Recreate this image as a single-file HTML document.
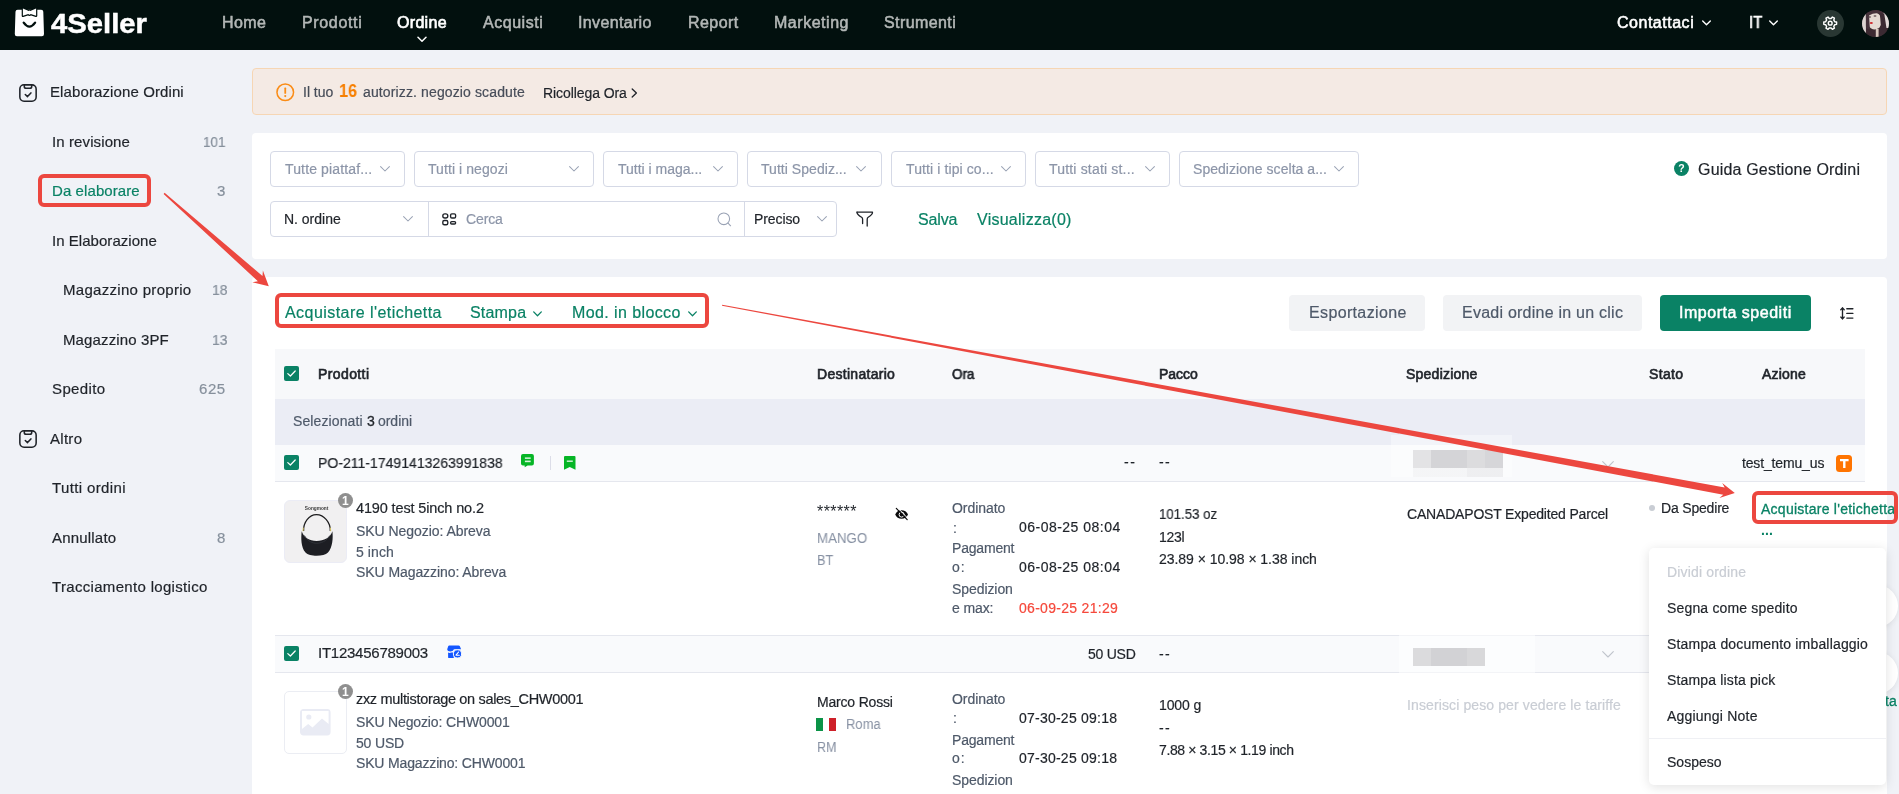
<!DOCTYPE html>
<html lang="it"><head><meta charset="utf-8"><title>4Seller</title>
<style>
html,body{margin:0;padding:0;}
body{width:1899px;height:794px;overflow:hidden;position:relative;background:#f0f2f7;font-family:"Liberation Sans", sans-serif;transform:translateZ(0);}
.t{position:absolute;white-space:pre;line-height:1;z-index:1;will-change:transform;}
.b{position:absolute;box-sizing:border-box;}
.sel{border:1px solid #d5d9e6;border-radius:4px;background:#fff;}
svg{position:absolute;overflow:visible;will-change:transform;}
</style></head><body>
<!-- header -->
<div class="b" style="left:0;top:0;width:1899px;height:49.5px;background:#02100e;"></div>
<!-- logo bag -->
<svg style="left:0;top:0" width="60" height="50" viewBox="0 0 60 50">
  <path d="M17.6 9.8 H41.2 Q43.2 9.8 43.3 11.7 L44 34 Q44 36.2 41.900 36.2 H16.900 Q14.800 36.2 14.800 34 L15.500 11.7 Q15.600 9.8 17.600 9.8 Z" fill="#fff"/>
  <path d="M22.900 8.500 L28.700 10.900 Q29.500 10.300 30.300 10.900 L36.100 8.500 V15.800 L30.700 14.100 Q29.500 15.300 28.300 14.100 L22.900 15.800 Z" fill="#fff" stroke="#02100e" stroke-width="2.4" stroke-linejoin="round"/>
  <path d="M22.900 8.500 L28.700 10.900 Q29.500 10.300 30.300 10.900 L36.100 8.500 V15.800 L30.700 14.100 Q29.500 15.300 28.300 14.100 L22.900 15.800 Z" fill="#fff"/>
  <path d="M23.700 22.600 Q29.400 30.600 35.100 22.600" fill="none" stroke="#02100e" stroke-width="2.3" stroke-linecap="round"/>
</svg>
<!-- nav chevron under Ordine -->
<svg style="left:417px;top:36px" width="10" height="7" viewBox="0 0 10 7"><path d="M1 1.2 L5 5.2 L9 1.2" fill="none" stroke="#fff" stroke-width="1.5" stroke-linecap="round" stroke-linejoin="round"/></svg>
<!-- Contattaci chevron / IT chevron -->
<svg style="left:1701.5px;top:19.5px" width="9" height="6" viewBox="0 0 9 6"><path d="M0.7 0.9 L4.5 4.7 L8.3 0.9" fill="none" stroke="#fff" stroke-width="1.4" stroke-linecap="round" stroke-linejoin="round"/></svg>
<svg style="left:1769.3px;top:19.5px" width="9" height="6" viewBox="0 0 9 6"><path d="M0.7 0.9 L4.5 4.7 L8.3 0.9" fill="none" stroke="#fff" stroke-width="1.4" stroke-linecap="round" stroke-linejoin="round"/></svg>
<!-- gear -->
<div class="b" style="left:1816.9px;top:9.9px;width:27.2px;height:27.2px;border-radius:50%;background:#293733;"></div>
<svg style="left:1822.8px;top:15.5px" width="14.4" height="14.4" viewBox="0 0 14.4 14.4" fill="none" stroke="#fff" stroke-width="1.45" stroke-linejoin="round"><path d="M11.75 5.67 L13.60 6.05 L13.60 8.35 L11.75 8.73 L10.80 10.37 L11.40 12.16 L9.40 13.32 L8.15 11.91 L6.25 11.91 L5.00 13.32 L3.00 12.16 L3.60 10.37 L2.65 8.73 L0.80 8.35 L0.80 6.05 L2.65 5.67 L3.60 4.03 L3.00 2.24 L5.00 1.08 L6.25 2.49 L8.15 2.49 L9.40 1.08 L11.40 2.24 L10.80 4.03 Z"/><circle cx="7.2" cy="7.2" r="1.9"/></svg>
<!-- avatar -->
<svg style="left:1861.8px;top:9.9px" width="27" height="27" viewBox="0 0 27 27">
  <defs><clipPath id="av"><circle cx="13.5" cy="13.5" r="13.5"/></clipPath><filter id="bl" x="-20%" y="-20%" width="140%" height="140%"><feGaussianBlur stdDeviation="0.5"/></filter></defs>
  <g clip-path="url(#av)"><rect width="27" height="27" fill="#3c2a30"/>
  <g filter="url(#bl)">
  <rect x="-2" y="4" width="7" height="20" fill="#ddd5d2"/>
  <rect x="21.500" y="1" width="7" height="17" fill="#e3dcda"/>
  <ellipse cx="12" cy="10.500" rx="7.600" ry="9" fill="#e5dad3" transform="rotate(-18 12 10.500)"/>
  <path d="M3.800 3 L6.800 2 L8.500 28 L4 28 Z" fill="#45313a"/>
  <path d="M6 2.500 Q14 -2 22 2 L20.500 5 Q14 1.500 7 5.500 Z" fill="#47333b"/>
  <path d="M17.800 3 L22.300 4 L26 28 L15.500 28 L18.800 15 Z" fill="#3b2930"/>
  <path d="M4 18.500 L13.200 20.500 L13.800 28 L5 28 Z" fill="#3e2b32"/>
  <rect x="13.800" y="19" width="2.800" height="9" fill="#d9c9c0"/>
  <ellipse cx="7.600" cy="7" rx="1.500" ry="0.800" fill="#5f4c50"/><ellipse cx="13" cy="6" rx="1.500" ry="0.800" fill="#5f4c50"/>
  </g><ellipse cx="9.300" cy="13" rx="1.600" ry="1" fill="#cf2a2e"/></g>
</svg>

<!-- sidebar icons -->
<svg style="left:19.1px;top:83.9px" width="18" height="18" viewBox="0 0 18 18" fill="none" stroke="#1f2329" stroke-width="1.55" stroke-linejoin="round" stroke-linecap="round"><rect x="0.85" y="0.85" width="16.3" height="16.3" rx="4.2"/><path d="M5.300 0.900 V2.400 Q5.300 4.200 7.100 4.200 H10.900 Q12.700 4.200 12.700 2.400 V0.900"/><path d="M6.300 10.500 L8.500 12.600 L11.900 8.900"/></svg>
<svg style="left:19.1px;top:429.9px" width="18" height="18" viewBox="0 0 18 18" fill="none" stroke="#1f2329" stroke-width="1.55" stroke-linejoin="round" stroke-linecap="round"><rect x="0.85" y="0.85" width="16.3" height="16.3" rx="4.2"/><path d="M5.300 0.900 V2.400 Q5.300 4.200 7.100 4.200 H10.900 Q12.700 4.200 12.700 2.400 V0.900"/><path d="M6.300 10.500 L8.500 12.600 L11.900 8.900"/></svg>
<!-- red box around Da elaborare -->
<div class="b" style="left:37.5px;top:174.4px;width:113.2px;height:32.2px;border:4px solid #ec473f;border-radius:6px;z-index:3;"></div>

<!-- alert -->
<div class="b" style="left:252px;top:68px;width:1635px;height:46.5px;background:#f4eae4;border:1px solid #f6d6b4;border-radius:4px;"></div>
<svg style="left:275.5px;top:82.5px" width="18.5" height="18.5" viewBox="0 0 18.5 18.5"><circle cx="9.25" cy="9.25" r="8.3" fill="none" stroke="#fa8c16" stroke-width="1.5"/><rect x="8.35" y="4.6" width="1.8" height="6.2" rx="0.6" fill="#fa8c16"/><circle cx="9.25" cy="13.1" r="1.05" fill="#fa8c16"/></svg>
<svg style="left:631px;top:88px" width="7" height="10" viewBox="0 0 7 10"><path d="M1.2 1 L5.4 5 L1.2 9" fill="none" stroke="#1f2329" stroke-width="1.3" stroke-linecap="round" stroke-linejoin="round"/></svg>

<!-- filter card -->
<div class="b" style="left:252px;top:133px;width:1635px;height:125.7px;background:#fff;border-radius:4px;"></div>
<!-- selects row1 -->
<div class="b sel" style="left:270px;top:151px;width:134.5px;height:35.6px;"></div>
<div class="b sel" style="left:414px;top:151px;width:179.5px;height:35.6px;"></div>
<div class="b sel" style="left:603px;top:151px;width:134.5px;height:35.6px;"></div>
<div class="b sel" style="left:747px;top:151px;width:134.5px;height:35.6px;"></div>
<div class="b sel" style="left:891px;top:151px;width:134.5px;height:35.6px;"></div>
<div class="b sel" style="left:1035px;top:151px;width:134.5px;height:35.6px;"></div>
<div class="b sel" style="left:1179px;top:151px;width:179.5px;height:35.6px;"></div>
<!-- row 2 selects -->
<div class="b sel" style="left:270px;top:201px;width:566.5px;height:35.6px;"></div>
<div class="b" style="left:428px;top:202px;width:1px;height:34px;background:#d5d9e6;"></div>
<div class="b" style="left:744px;top:202px;width:1px;height:34px;background:#d5d9e6;"></div>
<!-- select chevrons -->
<svg class="c" style="left:380px;top:165.5px" width="10" height="6" viewBox="0 0 10 6"><path d="M0.6 0.6 L5 5 L9.4 0.6" fill="none" stroke="#99a2b4" stroke-width="1.05" stroke-linecap="round" stroke-linejoin="round"/></svg>
<svg class="c" style="left:569.3px;top:165.5px" width="10" height="6" viewBox="0 0 10 6"><path d="M0.6 0.6 L5 5 L9.4 0.6" fill="none" stroke="#99a2b4" stroke-width="1.05" stroke-linecap="round" stroke-linejoin="round"/></svg>
<svg class="c" style="left:713px;top:165.5px" width="10" height="6" viewBox="0 0 10 6"><path d="M0.6 0.6 L5 5 L9.4 0.6" fill="none" stroke="#99a2b4" stroke-width="1.05" stroke-linecap="round" stroke-linejoin="round"/></svg>
<svg class="c" style="left:856px;top:165.5px" width="10" height="6" viewBox="0 0 10 6"><path d="M0.6 0.6 L5 5 L9.4 0.6" fill="none" stroke="#99a2b4" stroke-width="1.05" stroke-linecap="round" stroke-linejoin="round"/></svg>
<svg class="c" style="left:1001px;top:165.5px" width="10" height="6" viewBox="0 0 10 6"><path d="M0.6 0.6 L5 5 L9.4 0.6" fill="none" stroke="#99a2b4" stroke-width="1.05" stroke-linecap="round" stroke-linejoin="round"/></svg>
<svg class="c" style="left:1144.5px;top:165.5px" width="10" height="6" viewBox="0 0 10 6"><path d="M0.6 0.6 L5 5 L9.4 0.6" fill="none" stroke="#99a2b4" stroke-width="1.05" stroke-linecap="round" stroke-linejoin="round"/></svg>
<svg class="c" style="left:1334px;top:165.5px" width="10" height="6" viewBox="0 0 10 6"><path d="M0.6 0.6 L5 5 L9.4 0.6" fill="none" stroke="#99a2b4" stroke-width="1.05" stroke-linecap="round" stroke-linejoin="round"/></svg>
<svg class="c" style="left:403px;top:215.5px" width="10" height="6" viewBox="0 0 10 6"><path d="M0.6 0.6 L5 5 L9.4 0.6" fill="none" stroke="#99a2b4" stroke-width="1.05" stroke-linecap="round" stroke-linejoin="round"/></svg>
<svg class="c" style="left:817px;top:215.5px" width="10" height="6" viewBox="0 0 10 6"><path d="M0.6 0.6 L5 5 L9.4 0.6" fill="none" stroke="#99a2b4" stroke-width="1.05" stroke-linecap="round" stroke-linejoin="round"/></svg>
<!-- guide icon -->
<svg style="left:1674px;top:161.2px" width="15" height="15" viewBox="0 0 15 15"><circle cx="7.5" cy="7.5" r="7.5" fill="#0a8265"/><text x="7.5" y="11.3" font-family="Liberation Sans" font-weight="700" font-size="10.5" fill="#fff" text-anchor="middle">?</text></svg>
<!-- search grid icon -->
<svg style="left:441.5px;top:212.8px" width="14.5" height="12.5" viewBox="0 0 14.5 12.5" fill="none" stroke="#1f2329" stroke-width="1.35"><rect x="0.8" y="0.8" width="5" height="4.2" rx="2.1"/><rect x="8.6" y="0.8" width="5" height="4.2" rx="1.3"/><rect x="0.8" y="7.5" width="5" height="4.2" rx="1.5"/><rect x="8.6" y="8.6" width="5" height="2.4" rx="1.1"/></svg>
<!-- search magnifier -->
<svg style="left:716.5px;top:211.5px" width="15" height="15" viewBox="0 0 15 15" fill="none" stroke="#99a2b4" stroke-width="1.05" stroke-linecap="round"><circle cx="6.8" cy="6.8" r="5.8"/><path d="M11 11.2 L13.6 13.8"/></svg>
<!-- filter funnel -->
<svg style="left:855.5px;top:211px" width="17.5" height="16" viewBox="0 0 17.5 16" fill="none" stroke="#1f2329" stroke-width="1.3" stroke-linejoin="round" stroke-linecap="round"><path d="M1 1.2 H16.5 Q16.8 3.6 12.2 6.2 Q11.2 6.9 11.2 8.2 V15"/><path d="M1 1.2 Q1 3.6 5.6 6.2 Q6.6 6.9 6.6 8.2 V12.6"/></svg>

<!-- table card -->
<div class="b" style="left:252px;top:277px;width:1635px;height:530px;background:#fff;border-radius:4px;"></div>
<!-- toolbar red box -->
<div class="b" style="left:275.4px;top:293.4px;width:433.4px;height:34.3px;border:4px solid #ec473f;border-radius:6px;z-index:3;"></div>
<svg style="left:533.3px;top:311px" width="9" height="6" viewBox="0 0 9 6"><path d="M0.7 0.9 L4.5 4.7 L8.3 0.9" fill="none" stroke="#0a8265" stroke-width="1.3" stroke-linecap="round" stroke-linejoin="round"/></svg>
<svg style="left:688.4px;top:311px" width="9" height="6" viewBox="0 0 9 6"><path d="M0.7 0.9 L4.5 4.7 L8.3 0.9" fill="none" stroke="#0a8265" stroke-width="1.3" stroke-linecap="round" stroke-linejoin="round"/></svg>
<!-- buttons -->
<div class="b" style="left:1289px;top:295px;width:136px;height:35.5px;border-radius:4px;background:#f2f3f5;"></div>
<div class="b" style="left:1443px;top:295px;width:198.5px;height:35.5px;border-radius:4px;background:#f2f3f5;"></div>
<div class="b" style="left:1660px;top:295px;width:151px;height:35.5px;border-radius:4px;background:#0a8265;"></div>
<!-- density icon -->
<svg style="left:1839.6px;top:307.4px" width="13.6" height="12.8" viewBox="0 0 13.6 12.8" fill="none" stroke="#1f2329" stroke-width="1.35" stroke-linecap="round" stroke-linejoin="round"><path d="M2.500 1 V11.800"/><path d="M0.800 2.700 L2.500 1 L4.200 2.700"/><path d="M0.800 10.100 L2.500 11.800 L4.200 10.100"/><path d="M6.800 1.700 H12.900"/><path d="M6.800 6.400 H12.900"/><path d="M6.800 11.100 H12.900"/></svg>

<!-- table header -->
<div class="b" style="left:275px;top:349px;width:1590px;height:50px;background:#f7f8fa;"></div>
<div class="b" style="left:275px;top:399px;width:1590px;height:45.7px;background:#ebedf5;"></div>
<!-- order row 1 -->
<div class="b" style="left:275px;top:444.7px;width:1590px;height:37px;background:#f9fafc;border-bottom:1px solid #e5e7ee;"></div>
<!-- order row 2 -->
<div class="b" style="left:275px;top:635px;width:1590px;height:37.6px;background:#f9fafc;border-top:1px solid #e5e7ee;border-bottom:1px solid #e5e7ee;"></div>
<!-- checkboxes -->
<svg style="left:284.2px;top:366px" width="15" height="15" viewBox="0 0 15 15"><rect width="15" height="15" rx="2" fill="#0a8265"/><path d="M3.8 7.6 L6.4 10 L11.2 5" fill="none" stroke="#fff" stroke-width="1.25" stroke-linecap="round" stroke-linejoin="round"/></svg>
<svg style="left:284.2px;top:455px" width="15" height="15" viewBox="0 0 15 15"><rect width="15" height="15" rx="2" fill="#0a8265"/><path d="M3.8 7.6 L6.4 10 L11.2 5" fill="none" stroke="#fff" stroke-width="1.25" stroke-linecap="round" stroke-linejoin="round"/></svg>
<svg style="left:284.2px;top:646px" width="15" height="15" viewBox="0 0 15 15"><rect width="15" height="15" rx="2" fill="#0a8265"/><path d="M3.8 7.6 L6.4 10 L11.2 5" fill="none" stroke="#fff" stroke-width="1.25" stroke-linecap="round" stroke-linejoin="round"/></svg>
<!-- order row 1 icons -->
<svg style="left:521.3px;top:453.7px" width="12.9" height="13.4" viewBox="0 0 12.9 13.4"><path d="M2 0 H10.900 Q12.900 0 12.900 2 V9.400 Q12.900 11.400 10.900 11.400 H6.600 L3.700 13.300 V11.400 H2 Q0 11.400 0 9.400 V2 Q0 0 2 0 Z" fill="#06b526"/><rect x="3.900" y="3.400" width="5.800" height="1.500" fill="#d8f3dc"/><rect x="3.900" y="6.600" width="5.800" height="1.600" fill="#d8f3dc"/></svg>
<div class="b" style="left:550px;top:456px;width:1px;height:14px;background:#dcdde8;"></div>
<svg style="left:564.2px;top:456.1px" width="11.5" height="13.7" viewBox="0 0 11.5 13.7"><path d="M1 0 H10.500 Q11.500 0 11.500 1 V13.700 L5.750 11 L0 13.700 V1 Q0 0 1 0 Z" fill="#06b526"/><rect x="2.800" y="4.500" width="6" height="1.400" fill="#d8f3dc"/></svg>
<!-- blurred shipping 1 -->
<div class="b" style="left:1391px;top:435px;width:121px;height:42px;background:rgba(255,255,255,0.38);"></div>
<div class="b" style="left:1413px;top:467.5px;width:90px;height:9px;background:linear-gradient(90deg,rgba(225,225,228,0.25) 0 60%,rgba(225,225,228,0.5) 60%);"></div>
<div class="b" style="left:1413px;top:450px;width:90px;height:17.5px;background:linear-gradient(90deg,#e3e3e5 0 20%,#d4d4d7 20% 60%,#dcdcde 60% 80%,#d6d6d9 80%);"></div>
<svg style="left:1601.8px;top:460.5px" width="12" height="7" viewBox="0 0 12 7"><path d="M0.7 0.7 L6 6 L11.3 0.7" fill="none" stroke="#c0c4cc" stroke-width="1.1" stroke-linecap="round" stroke-linejoin="round"/></svg>
<!-- T icon -->
<div class="b" style="left:1835.5px;top:455.2px;width:16.7px;height:16.4px;border-radius:3.5px;background:#ff7400;"></div>
<svg style="left:1839.6px;top:459px" width="8.6" height="9" viewBox="0 0 8.6 9"><path d="M0 0 H8.6 V2.3 H5.5 V9 H3.1 V2.3 H0 Z" fill="#fff"/></svg>

<!-- product image 1 -->
<div class="b" style="left:284.2px;top:499.8px;width:62.7px;height:62.8px;border-radius:6px;background:#f1f0f1;border:1px solid #ebecf5;overflow:hidden;">
<svg style="left:-1px;top:-1px" width="63" height="63" viewBox="0 0 63 63">
  <text x="32.6" y="9.6" font-family="Liberation Sans" font-size="5.2" font-weight="700" fill="#3a3a3a" text-anchor="middle" textLength="23.5" lengthAdjust="spacingAndGlyphs">Songmont</text>
  <path d="M19.600 31 C19.200 22.500 25 14.700 32.500 14.700 C40 14.700 46.600 22.500 46.300 31" fill="none" stroke="#1c1c1e" stroke-width="1.25"/>
  <path d="M17.700 31.300 C16.900 38 17 47.500 21.500 52.500 C25.500 56.800 39.800 56.800 44 52.500 C48.600 47.500 49.200 38 48.400 31.300 C46.300 37.800 40 41 32.600 41 C25.200 41 20 37.800 17.700 31.300 Z" fill="#1d1e23"/>
  <path d="M20.500 35.500 C23.500 41.500 29 43.300 32.600 43.300 C36.500 43.300 42.500 41.500 45.800 35.500" fill="none" stroke="#34363c" stroke-width="0.8"/>
  <path d="M19.300 27.600 l-0.300 3.600" stroke="#d8c66a" stroke-width="1"/><path d="M46.400 27.600 l0.300 3.600" stroke="#d8c66a" stroke-width="1"/>
</svg></div>
<div class="b" style="left:338px;top:493.2px;width:15px;height:15px;border-radius:50%;background:#8f8f8f;"></div>
<svg style="left:338px;top:493.2px;z-index:2" width="15" height="15" viewBox="0 0 15 15"><text x="7.3" y="11.8" font-family="Liberation Sans" font-size="12" font-weight="700" fill="#fff" text-anchor="middle">1</text></svg>
<!-- eye-slash -->
<svg style="left:895px;top:507.600px" width="13.2" height="12.6" viewBox="0 0 13.2 12.6">
  <path d="M0.200 6.600 C2 0.900 11.100 0.900 13 6.600 C11.100 12.300 2 12.300 0.200 6.600 Z" fill="#0b0b0c"/>
  <circle cx="6.600" cy="6.600" r="2.500" fill="none" stroke="#fff" stroke-width="1"/>
  <path d="M2.700 -0.200 L13 10.600" stroke="#fff" stroke-width="1"/>
  <path d="M1.300 0.400 L12.200 11.600" stroke="#0b0b0c" stroke-width="1.200" stroke-linecap="round"/>
</svg>
<!-- status dot -->
<div class="b" style="left:1649px;top:505px;width:6px;height:6px;border-radius:50%;background:#c9cdd4;"></div>
<!-- action red box -->
<div class="b" style="left:1752.1px;top:491px;width:146.2px;height:32.9px;border:4px solid #ec473f;border-radius:6px;z-index:7;"></div>

<!-- order row 2 icon -->
<svg style="left:446.9px;top:645px" width="14.4" height="13.4" viewBox="0 0 14.4 13.4">
  <path d="M2.200 0.400 H11.600 Q12.500 0.400 12.900 1.300 L14.100 4.300 H7 Q5.900 6.500 3.500 6.500 Q0.500 6.500 0.200 4.300 L1.200 1.300 Q1.500 0.400 2.200 0.400 Z" fill="#1456ff"/>
  <path d="M1.100 7.600 Q2.600 8.300 4.200 7.600 H6.800 V13.100 H2 Q1.100 13.100 1.100 12.200 Z" fill="#1456ff"/>
  <circle cx="10.500" cy="8.900" r="4.100" fill="#1456ff" stroke="#f9fafc" stroke-width="1"/>
  <path d="M11.600 7 L9 10.200 H12.300" fill="none" stroke="#fff" stroke-width="1.100" stroke-linecap="round" stroke-linejoin="round"/>
</svg>
<!-- blurred shipping 2 -->
<div class="b" style="left:1399px;top:630.5px;width:136px;height:46.5px;background:rgba(255,255,255,0.55);"></div>
<div class="b" style="left:1413px;top:648px;width:72px;height:17.8px;background:linear-gradient(90deg,#dbdbdd 0 25%,#d2d2d5 25% 75%,#d8d8da 75%);"></div>
<svg style="left:1601.8px;top:651px" width="12" height="7" viewBox="0 0 12 7"><path d="M0.7 0.7 L6 6 L11.3 0.7" fill="none" stroke="#c0c4cc" stroke-width="1.1" stroke-linecap="round" stroke-linejoin="round"/></svg>
<!-- product image 2 -->
<div class="b" style="left:284.1px;top:691px;width:62.8px;height:62.6px;border-radius:5px;background:#fff;border:1px solid #ebedf3;"></div>
<svg style="left:300px;top:708.5px" width="30.6" height="26.5" viewBox="0 0 30.600 26.500"><rect x="0.900" y="0.900" width="28.800" height="24.700" rx="2.500" fill="#e9ebf4" stroke="#e9ebf4" stroke-width="1.800"/><path d="M2 2 H28.600 V15 L22 9.500 L12.500 18.500 L8.200 15 L2 20 Z" fill="#fff"/><circle cx="8.800" cy="8" r="2.600" fill="#e9ebf4"/></svg>
<div class="b" style="left:338px;top:684.2px;width:15px;height:15px;border-radius:50%;background:#8f8f8f;"></div>
<svg style="left:338px;top:684.2px;z-index:2" width="15" height="15" viewBox="0 0 15 15"><text x="7.3" y="11.8" font-family="Liberation Sans" font-size="12" font-weight="700" fill="#fff" text-anchor="middle">1</text></svg>
<!-- flag -->
<div class="b" style="left:815.9px;top:718.1px;width:20.2px;height:12.7px;background:linear-gradient(90deg,#0b9347 0 35%,#fff 35% 65.5%,#ce2029 65.5%);"></div>

<!-- right floating buttons (partially visible) -->
<div class="b" style="left:1856px;top:585px;width:42px;height:42px;border-radius:50%;background:#fff;box-shadow:0 1px 6px rgba(0,0,0,0.08);"></div>
<div class="b" style="left:1856px;top:652px;width:42px;height:42px;border-radius:50%;background:#fff;box-shadow:0 1px 6px rgba(0,0,0,0.08);"></div>
<div class="b" style="left:1887px;top:277px;width:12px;height:300px;background:#f0f2f7;"></div>

<!-- dropdown -->
<div class="b" style="left:1649px;top:548px;width:237px;height:236.5px;background:#fff;border-radius:5px;box-shadow:0 2px 12px rgba(0,0,0,0.12);z-index:5;"></div>
<div class="b" style="left:1649px;top:738px;width:237px;height:1px;background:#eff0f4;z-index:6;"></div>

<!-- arrows -->
<svg style="left:0;top:0;z-index:8" width="1899" height="794" viewBox="0 0 1899 794">
  <path d="M163.6 193.9 L257.9 281.2 L252.3 282.3 L268.8 286.3 L262.9 270.4 L262.5 276.1 L164.6 192.7 Z" fill="#ec473f"/>
  <path d="M722.0 305.8 L1723.3 494.7 L1719.4 498.1 L1734.8 493.1 L1722.2 482.9 L1724.7 487.5 L722.2 304.8 Z" fill="#ec473f"/>
</svg>

<span class="t" style="left:51.0px;top:10.0px;font-size:28px;color:#ffffff;letter-spacing:0.000px;font-weight:700;-webkit-text-stroke:0.5px #ffffff;transform-origin:0 0;transform:scaleX(1.0451);">4Seller</span>
<span class="t" style="left:221.8px;top:15.0px;font-size:16px;color:#b3b7b6;letter-spacing:0.371px;-webkit-text-stroke:0.55px #b3b7b6;">Home</span>
<span class="t" style="left:301.6px;top:15.0px;font-size:16px;color:#b3b7b6;letter-spacing:0.651px;-webkit-text-stroke:0.55px #b3b7b6;">Prodotti</span>
<span class="t" style="left:397.0px;top:15.0px;font-size:16px;color:#ffffff;letter-spacing:0.314px;-webkit-text-stroke:0.65px #ffffff;">Ordine</span>
<span class="t" style="left:482.6px;top:15.0px;font-size:16px;color:#b3b7b6;letter-spacing:0.524px;-webkit-text-stroke:0.55px #b3b7b6;">Acquisti</span>
<span class="t" style="left:578.4px;top:15.0px;font-size:16px;color:#b3b7b6;letter-spacing:0.348px;-webkit-text-stroke:0.55px #b3b7b6;">Inventario</span>
<span class="t" style="left:687.5px;top:15.0px;font-size:16px;color:#b3b7b6;letter-spacing:0.434px;-webkit-text-stroke:0.55px #b3b7b6;">Report</span>
<span class="t" style="left:773.8px;top:15.0px;font-size:16px;color:#b3b7b6;letter-spacing:0.531px;-webkit-text-stroke:0.55px #b3b7b6;">Marketing</span>
<span class="t" style="left:884.4px;top:15.0px;font-size:16px;color:#b3b7b6;letter-spacing:0.404px;-webkit-text-stroke:0.55px #b3b7b6;">Strumenti</span>
<span class="t" style="left:1617.3px;top:15.0px;font-size:16px;color:#ffffff;letter-spacing:0.517px;-webkit-text-stroke:0.55px #ffffff;">Contattaci</span>
<span class="t" style="left:1748.6px;top:15.0px;font-size:16px;color:#ffffff;letter-spacing:0.000px;-webkit-text-stroke:0.55px #ffffff;transform-origin:0 0;transform:scaleX(0.9424);">IT</span>
<span class="t" style="left:50.0px;top:84.0px;font-size:15px;color:#1f2329;letter-spacing:0.108px;-webkit-text-stroke:0.2px #1f2329;">Elaborazione Ordini</span>
<span class="t" style="left:52.2px;top:134.0px;font-size:15px;color:#1f2329;letter-spacing:0.107px;-webkit-text-stroke:0.2px #1f2329;">In revisione</span>
<span class="t" style="left:202.6px;top:134.0px;font-size:15px;color:#86909c;letter-spacing:0.000px;-webkit-text-stroke:0.2px #86909c;transform-origin:0 0;transform:scaleX(0.8989);">101</span>
<span class="t" style="left:52.2px;top:183.0px;font-size:15px;color:#0a8265;letter-spacing:0.089px;-webkit-text-stroke:0.2px #0a8265;">Da elaborare</span>
<span class="t" style="left:216.7px;top:183.0px;font-size:15px;color:#86909c;letter-spacing:-0.244px;-webkit-text-stroke:0.2px #86909c;">3</span>
<span class="t" style="left:52.2px;top:233.0px;font-size:15px;color:#1f2329;letter-spacing:0.039px;-webkit-text-stroke:0.2px #1f2329;">In Elaborazione</span>
<span class="t" style="left:63.3px;top:282.0px;font-size:15px;color:#1f2329;letter-spacing:0.300px;-webkit-text-stroke:0.2px #1f2329;">Magazzino proprio</span>
<span class="t" style="left:211.6px;top:282.0px;font-size:15px;color:#86909c;letter-spacing:0.000px;-webkit-text-stroke:0.2px #86909c;transform-origin:0 0;transform:scaleX(0.9348);">18</span>
<span class="t" style="left:63.3px;top:332.0px;font-size:15px;color:#1f2329;letter-spacing:0.123px;-webkit-text-stroke:0.2px #1f2329;">Magazzino 3PF</span>
<span class="t" style="left:211.6px;top:332.0px;font-size:15px;color:#86909c;letter-spacing:0.000px;-webkit-text-stroke:0.2px #86909c;transform-origin:0 0;transform:scaleX(0.9348);">13</span>
<span class="t" style="left:52.0px;top:381.0px;font-size:15px;color:#1f2329;letter-spacing:0.371px;-webkit-text-stroke:0.2px #1f2329;">Spedito</span>
<span class="t" style="left:198.6px;top:381.0px;font-size:15px;color:#86909c;letter-spacing:0.584px;-webkit-text-stroke:0.2px #86909c;">625</span>
<span class="t" style="left:50.0px;top:431.0px;font-size:15px;color:#1f2329;letter-spacing:0.289px;-webkit-text-stroke:0.2px #1f2329;">Altro</span>
<span class="t" style="left:52.0px;top:480.0px;font-size:15px;color:#1f2329;letter-spacing:0.365px;-webkit-text-stroke:0.2px #1f2329;">Tutti ordini</span>
<span class="t" style="left:52.2px;top:530.0px;font-size:15px;color:#1f2329;letter-spacing:0.192px;-webkit-text-stroke:0.2px #1f2329;">Annullato</span>
<span class="t" style="left:216.7px;top:530.0px;font-size:15px;color:#86909c;letter-spacing:-0.244px;-webkit-text-stroke:0.2px #86909c;">8</span>
<span class="t" style="left:52.2px;top:579.0px;font-size:15px;color:#1f2329;letter-spacing:0.320px;-webkit-text-stroke:0.2px #1f2329;">Tracciamento logistico</span>
<span class="t" style="left:303.0px;top:85.0px;font-size:14px;color:#474d59;letter-spacing:-0.012px;-webkit-text-stroke:0.2px #474d59;">Il tuo</span>
<span class="t" style="left:338.8px;top:82.0px;font-size:18.5px;color:#f77f00;letter-spacing:0.000px;font-weight:700;transform-origin:0 0;transform:scaleX(0.8796);">16</span>
<span class="t" style="left:363.0px;top:85.0px;font-size:14px;color:#474d59;letter-spacing:0.126px;-webkit-text-stroke:0.2px #474d59;">autorizz. negozio scadute</span>
<span class="t" style="left:543.0px;top:86.0px;font-size:14px;color:#1f2329;letter-spacing:-0.077px;-webkit-text-stroke:0.2px #1f2329;">Ricollega Ora</span>
<span class="t" style="left:284.8px;top:162.0px;font-size:14px;color:#8c95a8;letter-spacing:0.140px;-webkit-text-stroke:0.2px #8c95a8;">Tutte piattaf...</span>
<span class="t" style="left:428.4px;top:162.0px;font-size:14px;color:#8c95a8;letter-spacing:0.080px;-webkit-text-stroke:0.2px #8c95a8;">Tutti i negozi</span>
<span class="t" style="left:617.5px;top:162.0px;font-size:14px;color:#8c95a8;letter-spacing:-0.007px;-webkit-text-stroke:0.2px #8c95a8;">Tutti i maga...</span>
<span class="t" style="left:761.3px;top:162.0px;font-size:14px;color:#8c95a8;letter-spacing:0.044px;-webkit-text-stroke:0.2px #8c95a8;">Tutti Spediz...</span>
<span class="t" style="left:905.6px;top:162.0px;font-size:14px;color:#8c95a8;letter-spacing:0.103px;-webkit-text-stroke:0.2px #8c95a8;">Tutti i tipi co...</span>
<span class="t" style="left:1049.2px;top:162.0px;font-size:14px;color:#8c95a8;letter-spacing:0.179px;-webkit-text-stroke:0.2px #8c95a8;">Tutti stati st...</span>
<span class="t" style="left:1192.7px;top:162.0px;font-size:14px;color:#8c95a8;letter-spacing:0.038px;-webkit-text-stroke:0.2px #8c95a8;">Spedizione scelta a...</span>
<span class="t" style="left:1698.0px;top:162.0px;font-size:16px;color:#1f2329;letter-spacing:0.184px;-webkit-text-stroke:0.2px #1f2329;">Guida Gestione Ordini</span>
<span class="t" style="left:284.0px;top:212.0px;font-size:14px;color:#1f2329;letter-spacing:-0.014px;-webkit-text-stroke:0.2px #1f2329;">N. ordine</span>
<span class="t" style="left:466.0px;top:212.0px;font-size:14px;color:#8c95a8;letter-spacing:-0.115px;-webkit-text-stroke:0.2px #8c95a8;">Cerca</span>
<span class="t" style="left:754.3px;top:212.0px;font-size:14px;color:#1f2329;letter-spacing:-0.098px;-webkit-text-stroke:0.2px #1f2329;">Preciso</span>
<span class="t" style="left:918.4px;top:212.0px;font-size:16px;color:#0a8265;letter-spacing:-0.158px;-webkit-text-stroke:0.2px #0a8265;">Salva</span>
<span class="t" style="left:976.7px;top:212.0px;font-size:16px;color:#0a8265;letter-spacing:0.259px;-webkit-text-stroke:0.2px #0a8265;">Visualizza(0)</span>
<span class="t" style="left:285.0px;top:305.0px;font-size:16px;color:#0a8265;letter-spacing:0.446px;-webkit-text-stroke:0.2px #0a8265;">Acquistare l&#x27;etichetta</span>
<span class="t" style="left:470.4px;top:305.0px;font-size:16px;color:#0a8265;letter-spacing:0.192px;-webkit-text-stroke:0.2px #0a8265;">Stampa</span>
<span class="t" style="left:572.4px;top:305.0px;font-size:16px;color:#0a8265;letter-spacing:0.402px;-webkit-text-stroke:0.2px #0a8265;">Mod. in blocco</span>
<span class="t" style="left:1308.6px;top:305.0px;font-size:16px;color:#4e5969;letter-spacing:0.355px;-webkit-text-stroke:0.2px #4e5969;">Esportazione</span>
<span class="t" style="left:1462.4px;top:305.0px;font-size:16px;color:#4e5969;letter-spacing:0.239px;-webkit-text-stroke:0.2px #4e5969;">Evadi ordine in un clic</span>
<span class="t" style="left:1679.4px;top:305.0px;font-size:16px;color:#ffffff;letter-spacing:0.519px;-webkit-text-stroke:0.5px #ffffff;">Importa spediti</span>
<span class="t" style="left:317.7px;top:367.0px;font-size:14px;color:#1f2329;letter-spacing:0.393px;-webkit-text-stroke:0.65px #1f2329;">Prodotti</span>
<span class="t" style="left:816.5px;top:367.0px;font-size:14px;color:#1f2329;letter-spacing:0.291px;-webkit-text-stroke:0.65px #1f2329;">Destinatario</span>
<span class="t" style="left:951.6px;top:367.0px;font-size:14px;color:#1f2329;letter-spacing:0.000px;-webkit-text-stroke:0.65px #1f2329;transform-origin:0 0;transform:scaleX(0.9596);">Ora</span>
<span class="t" style="left:1158.7px;top:367.0px;font-size:14px;color:#1f2329;letter-spacing:-0.030px;-webkit-text-stroke:0.65px #1f2329;">Pacco</span>
<span class="t" style="left:1405.9px;top:367.0px;font-size:14px;color:#1f2329;letter-spacing:0.235px;-webkit-text-stroke:0.65px #1f2329;">Spedizione</span>
<span class="t" style="left:1649.1px;top:367.0px;font-size:14px;color:#1f2329;letter-spacing:0.324px;-webkit-text-stroke:0.65px #1f2329;">Stato</span>
<span class="t" style="left:1761.7px;top:367.0px;font-size:14px;color:#1f2329;letter-spacing:0.217px;-webkit-text-stroke:0.65px #1f2329;">Azione</span>
<span class="t" style="left:292.9px;top:414.0px;font-size:14px;color:#4e5969;letter-spacing:0.110px;-webkit-text-stroke:0.2px #4e5969;">Selezionati </span>
<span class="t" style="left:366.5px;top:414.0px;font-size:14px;color:#1f2329;letter-spacing:-0.297px;-webkit-text-stroke:0.3px #1f2329;">3</span>
<span class="t" style="left:374.0px;top:414.0px;font-size:14px;color:#4e5969;letter-spacing:0.010px;-webkit-text-stroke:0.2px #4e5969;"> ordini</span>
<span class="t" style="left:317.7px;top:455.0px;font-size:15px;color:#1f2329;letter-spacing:0.000px;-webkit-text-stroke:0.2px #1f2329;transform-origin:0 0;transform:scaleX(0.9356);">PO-211-17491413263991838</span>
<span class="t" style="left:1124.4px;top:455.0px;font-size:14px;color:#1f2329;letter-spacing:1.472px;-webkit-text-stroke:0.2px #1f2329;">--</span>
<span class="t" style="left:1159.4px;top:455.0px;font-size:14px;color:#1f2329;letter-spacing:1.272px;-webkit-text-stroke:0.2px #1f2329;">--</span>
<span class="t" style="left:1741.6px;top:456.0px;font-size:14px;color:#1f2329;letter-spacing:-0.151px;-webkit-text-stroke:0.2px #1f2329;">test_temu_us</span>
<span class="t" style="left:356.2px;top:501.0px;font-size:14.5px;color:#1f2329;letter-spacing:-0.137px;-webkit-text-stroke:0.2px #1f2329;">4190 test 5inch no.2</span>
<span class="t" style="left:355.9px;top:524.0px;font-size:14px;color:#4e5969;letter-spacing:-0.045px;-webkit-text-stroke:0.2px #4e5969;">SKU Negozio: Abreva</span>
<span class="t" style="left:355.9px;top:545.0px;font-size:14px;color:#4e5969;letter-spacing:0.088px;-webkit-text-stroke:0.2px #4e5969;">5 inch</span>
<span class="t" style="left:355.9px;top:565.0px;font-size:14px;color:#4e5969;letter-spacing:-0.072px;-webkit-text-stroke:0.2px #4e5969;">SKU Magazzino: Abreva</span>
<span class="t" style="left:816.8px;top:504.0px;font-size:16px;color:#1f2329;letter-spacing:0.408px;-webkit-text-stroke:0.01px #1f2329;">******</span>
<span class="t" style="left:816.9px;top:531.0px;font-size:14px;color:#8791a3;letter-spacing:0.000px;-webkit-text-stroke:0.01px #8791a3;transform-origin:0 0;transform:scaleX(0.9491);">MANGO</span>
<span class="t" style="left:816.9px;top:553.0px;font-size:14px;color:#8791a3;letter-spacing:0.000px;-webkit-text-stroke:0.01px #8791a3;transform-origin:0 0;transform:scaleX(0.9111);">BT</span>
<span class="t" style="left:951.7px;top:501.0px;font-size:14px;color:#4e5969;letter-spacing:-0.043px;-webkit-text-stroke:0.2px #4e5969;">Ordinato</span>
<span class="t" style="left:952.7px;top:521.0px;font-size:14px;color:#4e5969;letter-spacing:0.000px;-webkit-text-stroke:0.2px #4e5969;">:</span>
<span class="t" style="left:1019.0px;top:520.0px;font-size:14px;color:#1f2329;letter-spacing:0.479px;-webkit-text-stroke:0.2px #1f2329;">06-08-25 08:04</span>
<span class="t" style="left:951.7px;top:541.0px;font-size:14px;color:#4e5969;letter-spacing:-0.190px;-webkit-text-stroke:0.2px #4e5969;">Pagament</span>
<span class="t" style="left:951.7px;top:560.0px;font-size:14px;color:#4e5969;letter-spacing:1.012px;-webkit-text-stroke:0.2px #4e5969;">o:</span>
<span class="t" style="left:1019.0px;top:560.0px;font-size:14px;color:#1f2329;letter-spacing:0.479px;-webkit-text-stroke:0.2px #1f2329;">06-08-25 08:04</span>
<span class="t" style="left:951.7px;top:582.0px;font-size:14px;color:#4e5969;letter-spacing:-0.075px;-webkit-text-stroke:0.2px #4e5969;">Spedizion</span>
<span class="t" style="left:951.7px;top:601.0px;font-size:14px;color:#4e5969;letter-spacing:-0.103px;-webkit-text-stroke:0.2px #4e5969;">e max:</span>
<span class="t" style="left:1019.0px;top:601.0px;font-size:14px;color:#f5483b;letter-spacing:0.295px;-webkit-text-stroke:0.2px #f5483b;">06-09-25 21:29</span>
<span class="t" style="left:1159.4px;top:507.0px;font-size:14px;color:#1f2329;letter-spacing:0.000px;-webkit-text-stroke:0.2px #1f2329;transform-origin:0 0;transform:scaleX(0.9447);">101.53 oz</span>
<span class="t" style="left:1159.4px;top:530.0px;font-size:14px;color:#1f2329;letter-spacing:-0.290px;-webkit-text-stroke:0.2px #1f2329;">123l</span>
<span class="t" style="left:1159.4px;top:552.0px;font-size:14px;color:#1f2329;letter-spacing:-0.038px;-webkit-text-stroke:0.2px #1f2329;">23.89 × 10.98 × 1.38 inch</span>
<span class="t" style="left:1406.7px;top:507.0px;font-size:14px;color:#1f2329;letter-spacing:-0.183px;-webkit-text-stroke:0.2px #1f2329;">CANADAPOST Expedited Parcel</span>
<span class="t" style="left:1660.5px;top:501.0px;font-size:14px;color:#1f2329;letter-spacing:-0.183px;-webkit-text-stroke:0.2px #1f2329;">Da Spedire</span>
<span class="t" style="left:1761.1px;top:502.0px;font-size:14px;color:#0a8265;letter-spacing:0.255px;-webkit-text-stroke:0.3px #0a8265;">Acquistare l&#x27;etichetta</span>
<span class="t" style="left:1761.4px;top:523.0px;font-size:14px;color:#0a8265;letter-spacing:0.114px;font-weight:700;">...</span>
<span class="t" style="left:317.5px;top:645.0px;font-size:15px;color:#1f2329;letter-spacing:-0.249px;-webkit-text-stroke:0.2px #1f2329;">IT123456789003</span>
<span class="t" style="left:1087.8px;top:647.0px;font-size:14px;color:#1f2329;letter-spacing:-0.246px;-webkit-text-stroke:0.2px #1f2329;">50 USD</span>
<span class="t" style="left:1159.4px;top:647.0px;font-size:14px;color:#1f2329;letter-spacing:1.272px;-webkit-text-stroke:0.2px #1f2329;">--</span>
<span class="t" style="left:355.9px;top:692.0px;font-size:14.5px;color:#1f2329;letter-spacing:-0.320px;-webkit-text-stroke:0.2px #1f2329;">zxz multistorage on sales_CHW0001</span>
<span class="t" style="left:355.9px;top:715.0px;font-size:14px;color:#4e5969;letter-spacing:-0.142px;-webkit-text-stroke:0.2px #4e5969;">SKU Negozio: CHW0001</span>
<span class="t" style="left:355.9px;top:736.0px;font-size:14px;color:#4e5969;letter-spacing:-0.166px;-webkit-text-stroke:0.2px #4e5969;">50 USD</span>
<span class="t" style="left:355.9px;top:756.0px;font-size:14px;color:#4e5969;letter-spacing:-0.155px;-webkit-text-stroke:0.2px #4e5969;">SKU Magazzino: CHW0001</span>
<span class="t" style="left:816.6px;top:695.0px;font-size:14px;color:#1f2329;letter-spacing:-0.190px;-webkit-text-stroke:0.2px #1f2329;">Marco Rossi</span>
<span class="t" style="left:846.2px;top:717.0px;font-size:14px;color:#8791a3;letter-spacing:0.000px;-webkit-text-stroke:0.01px #8791a3;transform-origin:0 0;transform:scaleX(0.9288);">Roma</span>
<span class="t" style="left:816.6px;top:740.0px;font-size:14px;color:#8791a3;letter-spacing:0.000px;-webkit-text-stroke:0.01px #8791a3;transform-origin:0 0;transform:scaleX(0.8999);">RM</span>
<span class="t" style="left:951.7px;top:692.0px;font-size:14px;color:#4e5969;letter-spacing:-0.043px;-webkit-text-stroke:0.2px #4e5969;">Ordinato</span>
<span class="t" style="left:952.7px;top:711.0px;font-size:14px;color:#4e5969;letter-spacing:0.000px;-webkit-text-stroke:0.2px #4e5969;">:</span>
<span class="t" style="left:1019.0px;top:711.0px;font-size:14px;color:#1f2329;letter-spacing:0.233px;-webkit-text-stroke:0.2px #1f2329;">07-30-25 09:18</span>
<span class="t" style="left:951.7px;top:733.0px;font-size:14px;color:#4e5969;letter-spacing:-0.190px;-webkit-text-stroke:0.2px #4e5969;">Pagament</span>
<span class="t" style="left:951.7px;top:751.0px;font-size:14px;color:#4e5969;letter-spacing:1.012px;-webkit-text-stroke:0.2px #4e5969;">o:</span>
<span class="t" style="left:1019.0px;top:751.0px;font-size:14px;color:#1f2329;letter-spacing:0.233px;-webkit-text-stroke:0.2px #1f2329;">07-30-25 09:18</span>
<span class="t" style="left:951.7px;top:773.0px;font-size:14px;color:#4e5969;letter-spacing:-0.075px;-webkit-text-stroke:0.2px #4e5969;">Spedizion</span>
<span class="t" style="left:1159.4px;top:698.0px;font-size:14px;color:#1f2329;letter-spacing:-0.106px;-webkit-text-stroke:0.2px #1f2329;">1000 g</span>
<span class="t" style="left:1159.4px;top:721.0px;font-size:14px;color:#1f2329;letter-spacing:1.272px;-webkit-text-stroke:0.2px #1f2329;">--</span>
<span class="t" style="left:1159.4px;top:743.0px;font-size:14px;color:#1f2329;letter-spacing:-0.374px;-webkit-text-stroke:0.2px #1f2329;">7.88 × 3.15 × 1.19 inch</span>
<span class="t" style="left:1406.7px;top:698.0px;font-size:14px;color:#c9cdd4;letter-spacing:0.115px;-webkit-text-stroke:0.2px #c9cdd4;">Inserisci peso per vedere le tariffe</span>
<span class="t" style="left:1884.6px;top:694.0px;font-size:14px;color:#0a8265;letter-spacing:0.113px;-webkit-text-stroke:0.3px #0a8265;">ta</span>
<span class="t" style="left:1667.3px;top:565.0px;font-size:14px;color:#c9cdd4;letter-spacing:0.171px;-webkit-text-stroke:0.2px #c9cdd4;z-index:6;">Dividi ordine</span>
<span class="t" style="left:1667.3px;top:601.0px;font-size:14px;color:#1f2329;letter-spacing:0.168px;-webkit-text-stroke:0.2px #1f2329;z-index:6;">Segna come spedito</span>
<span class="t" style="left:1667.3px;top:637.0px;font-size:14px;color:#1f2329;letter-spacing:0.177px;-webkit-text-stroke:0.2px #1f2329;z-index:6;">Stampa documento imballaggio</span>
<span class="t" style="left:1667.3px;top:673.0px;font-size:14px;color:#1f2329;letter-spacing:0.154px;-webkit-text-stroke:0.2px #1f2329;z-index:6;">Stampa lista pick</span>
<span class="t" style="left:1667.3px;top:709.0px;font-size:14px;color:#1f2329;letter-spacing:0.212px;-webkit-text-stroke:0.2px #1f2329;z-index:6;">Aggiungi Note</span>
<span class="t" style="left:1667.3px;top:755.0px;font-size:14px;color:#1f2329;letter-spacing:0.003px;-webkit-text-stroke:0.2px #1f2329;z-index:6;">Sospeso</span>
</body></html>
